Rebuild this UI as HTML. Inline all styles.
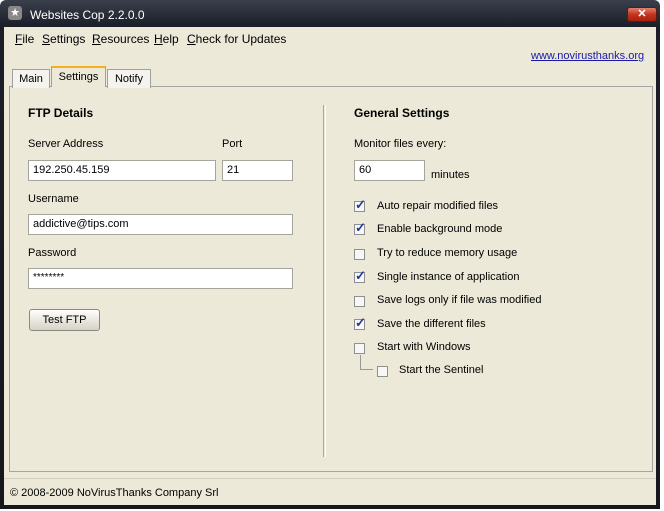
<!DOCTYPE html>
<html><head><style>
*{margin:0;padding:0;box-sizing:border-box}
body{width:664px;height:511px;background:#fff;font-family:"Liberation Sans",sans-serif;font-size:11px;color:#000;position:relative;overflow:hidden}
.abs{position:absolute}
#frame{left:0;top:0;width:660px;height:509px;background:linear-gradient(#3a3f4c,#1b1e27 27px,#15171d);border-radius:6px 6px 0 0}
#title{left:30px;top:8px;color:#fff;font-size:12px}
#body{left:4px;top:27px;width:652px;height:478px;background:#ece9d8}
.menu{top:32px;font-size:12px}
.menu u{text-decoration:underline}
#link{left:531px;top:50px;color:#1a1aa6;text-decoration:underline;font-size:11px}
.tab{top:68px;height:19px;border:1px solid #a0a0a0;border-bottom:none;background:#f4f3ee;padding:3px 0 0;text-align:center}
#panel{left:9px;top:86px;width:644px;height:386px;border:1px solid #a5a5a5;background:#ece9d8}
.inp{background:#fff;border:1px solid #a5a59c;height:21px;padding:3px 0 0 4px}
.b{font-weight:bold;font-size:12px}
.cb{width:11px;height:11px;border:1px solid #8f8f8f;background:#f7f7f5}
.ck{color:#21399c;font-size:13px;font-weight:bold;position:absolute;left:0px;top:-5px}
#status{left:4px;top:478px;width:652px;height:27px;border-top:1px solid #d4d0c0;padding:8px 0 0 6px}
</style></head><body>
<div class="abs" id="frame"></div>
<div class="abs" style="left:8px;top:6px;width:14px;height:14px;border-radius:3px;background:#888;color:#fff;font-size:11px;text-align:center;line-height:14px">★</div>
<div class="abs" id="title">Websites Cop 2.2.0.0</div>
<div class="abs" style="left:627px;top:7px;width:30px;height:15px;background:linear-gradient(#e0826f,#c4331e 50%,#a8200e);border:1px solid #5a1a10;border-radius:3px;color:#fff;font-weight:bold;text-align:center;font-size:11px;line-height:13px">✕</div>
<div class="abs" id="body"></div>
<div class="abs menu" style="left:15px"><u>F</u>ile</div>
<div class="abs menu" style="left:42px"><u>S</u>ettings</div>
<div class="abs menu" style="left:92px"><u>R</u>esources</div>
<div class="abs menu" style="left:154px"><u>H</u>elp</div>
<div class="abs menu" style="left:187px"><u>C</u>heck for Updates</div>
<div class="abs" id="link">www.novirusthanks.org</div>
<div class="abs" id="panel"></div>
<div class="abs tab" style="left:12px;width:38px;top:69px">Main</div>
<div class="abs tab" style="left:51px;width:55px;top:66px;height:21px;border-top:2px solid #f2b01e;background:#ece9d8">Settings</div>
<div class="abs tab" style="left:107px;width:44px;top:69px">Notify</div>

<div class="abs b" style="left:28px;top:106px">FTP Details</div>
<div class="abs" style="left:28px;top:138px">Server Address</div>
<div class="abs" style="left:222px;top:138px">Port</div>
<div class="abs inp" style="left:28px;top:160px;width:188px">192.250.45.159</div>
<div class="abs inp" style="left:222px;top:160px;width:71px">21</div>
<div class="abs" style="left:28px;top:193px">Username</div>
<div class="abs inp" style="left:28px;top:214px;width:265px">addictive@tips.com</div>
<div class="abs" style="left:28px;top:247px">Password</div>
<div class="abs inp" style="left:28px;top:268px;width:265px;font-size:10px">********</div>
<div class="abs" style="left:29px;top:309px;width:71px;height:22px;border:1px solid #8a8a80;border-radius:3px;background:linear-gradient(#fff,#e6e4da 60%,#d6d3c6);text-align:center;padding-top:4px">Test FTP</div>
<div class="abs" style="left:323px;top:105px;width:3px;height:352px;border-left:1px solid #aca899;border-right:1px solid #fff"></div>

<div class="abs b" style="left:354px;top:106px">General Settings</div>
<div class="abs" style="left:354px;top:138px">Monitor files every:</div>
<div class="abs inp" style="left:354px;top:160px;width:71px">60</div>
<div class="abs" style="left:431px;top:169px">minutes</div>

<div class="abs cb" style="left:354px;top:201px"><span class="ck">✓</span></div><div class="abs" style="left:377px;top:200px">Auto repair modified files</div>
<div class="abs cb" style="left:354px;top:224px"><span class="ck">✓</span></div><div class="abs" style="left:377px;top:223px">Enable background mode</div>
<div class="abs cb" style="left:354px;top:249px"></div><div class="abs" style="left:377px;top:247px">Try to reduce memory usage</div>
<div class="abs cb" style="left:354px;top:272px"><span class="ck">✓</span></div><div class="abs" style="left:377px;top:271px">Single instance of application</div>
<div class="abs cb" style="left:354px;top:296px"></div><div class="abs" style="left:377px;top:294px">Save logs only if file was modified</div>
<div class="abs cb" style="left:354px;top:319px"><span class="ck">✓</span></div><div class="abs" style="left:377px;top:318px">Save the different files</div>
<div class="abs cb" style="left:354px;top:343px"></div><div class="abs" style="left:377px;top:341px">Start with Windows</div>
<div class="abs" style="left:360px;top:355px;width:13px;height:15px;border-left:1px solid #999;border-bottom:1px solid #999"></div>
<div class="abs cb" style="left:377px;top:366px"></div><div class="abs" style="left:399px;top:364px">Start the Sentinel</div>

<div class="abs" id="status">© 2008-2009 NoVirusThanks Company Srl</div>
</body></html>
